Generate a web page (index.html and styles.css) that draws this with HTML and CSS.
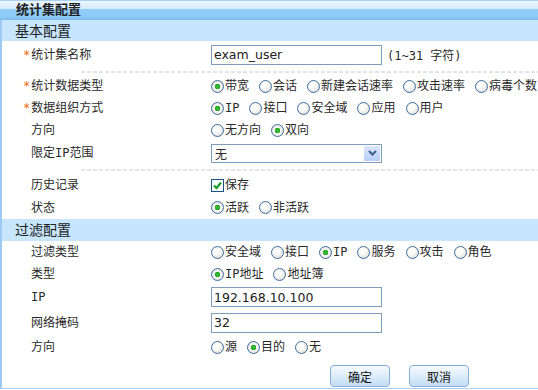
FILE: index.html
```html
<!doctype html>

<html lang="zh-CN">
<head>
    <meta charset="utf-8">
    <title>统计集配置</title>
    <link rel="stylesheet" href="styles.css">
</head>

<body>
<div class="panel">
    <div class="titlebar">统计集配置</div>

    <div class="section-head">基本配置</div>
    <div class="row row-tall">
        <label class="label req">统计集名称</label>
        <div class="value">
            <input class="text" type="text" value="exam_user">
            <span class="hint">(1~31 字符)</span>
        </div>
    </div>
    <div class="sep"></div>
    <div class="row">
        <label class="label req">统计数据类型</label>
        <div class="value">
            <label class="opt"><input type="radio" name="dtype" checked>带宽</label>
            <label class="opt"><input type="radio" name="dtype">会话</label>
            <label class="opt"><input type="radio" name="dtype">新建会话速率</label>
            <label class="opt"><input type="radio" name="dtype">攻击速率</label>
            <label class="opt"><input type="radio" name="dtype">病毒个数</label>
        </div>
    </div>
    <div class="row">
        <label class="label req">数据组织方式</label>
        <div class="value">
            <label class="opt"><input type="radio" name="org" checked>IP</label>
            <label class="opt"><input type="radio" name="org">接口</label>
            <label class="opt"><input type="radio" name="org">安全域</label>
            <label class="opt"><input type="radio" name="org">应用</label>
            <label class="opt"><input type="radio" name="org">用户</label>
        </div>
    </div>
    <div class="row">
        <label class="label">方向</label>
        <div class="value">
            <label class="opt"><input type="radio" name="dir">无方向</label>
            <label class="opt"><input type="radio" name="dir" checked>双向</label>
        </div>
    </div>
    <div class="row row-select">
        <label class="label">限定IP范围</label>
        <div class="value">
            <div class="select">
                <span class="select-text">无</span>
                <span class="select-arrow">
                    <svg width="9" height="6" viewBox="0 0 9 6"><path d="M1 1 L4.5 4.5 L8 1" fill="none" stroke="#3d5a8a" stroke-width="2"/></svg>
                </span>
            </div>
        </div>
    </div>
    <div class="sep sep-2"></div>
    <div class="row">
        <label class="label">历史记录</label>
        <div class="value">
            <label class="opt">
                <span class="check">
                    <svg width="11" height="11" viewBox="0 0 11 11"><path d="M2 5.5 L4.5 8 L9 2.5" fill="none" stroke="#1e9e2a" stroke-width="2.2"/></svg>
                </span>保存
            </label>
        </div>
    </div>
    <div class="row row-last">
        <label class="label">状态</label>
        <div class="value">
            <label class="opt"><input type="radio" name="state" checked>活跃</label>
            <label class="opt"><input type="radio" name="state">非活跃</label>
        </div>
    </div>

    <div class="section-head section-head-2">过滤配置</div>
    <div class="row">
        <label class="label">过滤类型</label>
        <div class="value">
            <label class="opt"><input type="radio" name="ftype">安全域</label>
            <label class="opt"><input type="radio" name="ftype">接口</label>
            <label class="opt"><input type="radio" name="ftype" checked>IP</label>
            <label class="opt"><input type="radio" name="ftype">服务</label>
            <label class="opt"><input type="radio" name="ftype">攻击</label>
            <label class="opt"><input type="radio" name="ftype">角色</label>
        </div>
    </div>
    <div class="row">
        <label class="label">类型</label>
        <div class="value">
            <label class="opt"><input type="radio" name="atype" checked>IP地址</label>
            <label class="opt"><input type="radio" name="atype">地址簿</label>
        </div>
    </div>
    <div class="row row-ip">
        <label class="label">IP</label>
        <div class="value">
            <input class="text" type="text" value="192.168.10.100">
        </div>
    </div>
    <div class="row row-mask">
        <label class="label">网络掩码</label>
        <div class="value">
            <input class="text" type="text" value="32">
        </div>
    </div>
    <div class="row">
        <label class="label">方向</label>
        <div class="value">
            <label class="opt"><input type="radio" name="fdir">源</label>
            <label class="opt"><input type="radio" name="fdir" checked>目的</label>
            <label class="opt"><input type="radio" name="fdir">无</label>
        </div>
    </div>

    <div class="buttons">
        <button class="btn">确定</button>
        <button class="btn">取消</button>
    </div>
</div>
</body>
</html>
```

FILE: styles.css
```css
body {
    margin: 0;
    background: #fff;
    font-family: "DejaVu Sans Mono", "Noto Sans CJK SC", monospace;
    font-size: 12px;
    color: #2a2a2a;
    overflow: hidden;
}

.panel {
    width: 538px;
    height: 389px;
    box-sizing: border-box;
    border-left: 2px solid #9ccaf3;
    border-bottom: 1px solid #a9cff2;
}

.titlebar {
    height: 20px;
    margin-left: -2px;
    padding-left: 16px;
    box-sizing: border-box;
    line-height: 20px;
    font-size: 13px;
    font-weight: bold;
    color: #222;
    background: linear-gradient(to bottom,
        #a6d0f5 0, #a6d0f5 1px,
        #eef7ff 1px, #d3eafd 9px,
        #92cdfb 9px, #8ecbfb 17px,
        #88c4f4 17px, #88c4f4 19px,
        #7cbcef 19px, #7cbcef 20px);
}

.section-head {
    height: 21px;
    padding-left: 13px;
    line-height: 23px;
    font-size: 14px;
    color: #222;
    background-color: #c7e5fd;
}
.section-head-2 {
    height: 22px;
}

.row {
    display: grid;
    grid-template-columns: 209px 1fr;
    align-items: center;
    height: 22px;
}
.row-tall {
    height: 27px;
}
.row-select {
    height: 24px;
}
.row-last {
    height: 23px;
}
.row-ip {
    height: 24px;
}
.row-mask {
    height: 27px;
}

.label {
    padding-left: 29px;
    line-height: 14px;
}
.label.req::before {
    content: "*";
    color: #f26a0c;
    margin-left: -8px;
    margin-right: 1px;
}

.value {
    display: flex;
    align-items: center;
    white-space: nowrap;
}

.text {
    width: 171px;
    height: 20px;
    box-sizing: border-box;
    margin: 0;
    padding: 0 2px;
    border: 1px solid #7f9db9;
    font-family: "DejaVu Sans", sans-serif;
    font-size: 12.5px;
    color: #222;
    outline: none;
}
.hint {
    margin-left: 5px;
}

.opt {
    display: inline-flex;
    align-items: center;
    margin-right: 10px;
    line-height: 14px;
}
.opt input[type=radio] {
    appearance: none;
    width: 13px;
    height: 13px;
    margin: 0 1px 0 0;
    box-sizing: border-box;
    border: 1px solid #3f6d9e;
    border-radius: 50%;
    background: radial-gradient(circle at 40% 35%, #fff 0, #fbfbfa 35%, #d2d2cc 100%);
}
.opt input[type=radio]:checked {
    background: radial-gradient(circle, #3cc63c 0, #22a322 2.5px, #f4f4f2 3px, #f4f4f2 4px, #d8d8d3 6.5px);
}

.check {
    display: inline-flex;
    align-items: center;
    justify-content: center;
    width: 13px;
    height: 13px;
    box-sizing: border-box;
    margin-right: 1px;
    border: 1px solid #1c5180;
    background: #fff;
}

.select {
    display: flex;
    align-items: center;
    width: 171px;
    height: 19px;
    box-sizing: border-box;
    border: 1px solid #7f9db9;
    background: #fff;
}
.select-text {
    flex: 1;
    padding-left: 3px;
}
.select-arrow {
    display: flex;
    align-items: center;
    justify-content: center;
    width: 16px;
    height: 15px;
    margin-right: 1px;
    border-radius: 1px;
    background: linear-gradient(to bottom, #dbe6fb, #b9cdf5);
}

.sep {
    height: 2px;
    margin: 3px 0 2px 79px;
    background: repeating-linear-gradient(90deg, #e4e4e4 0, #e4e4e4 4px, transparent 4px, transparent 6px);
}
.sep-2 {
    margin: 4px 0 3px 79px;
}

.buttons {
    display: flex;
    gap: 19px;
    padding: 7px 0 0 328px;
}
.btn {
    width: 60px;
    height: 22px;
    margin: 0;
    padding: 0;
    border: 1px solid #86aed6;
    border-radius: 4px;
    font-family: "Noto Sans CJK SC", sans-serif;
    font-size: 12px;
    color: #111;
    background: linear-gradient(to bottom, #f5faff 0, #e0eefc 45%, #c2ddf6 100%);
}
```
